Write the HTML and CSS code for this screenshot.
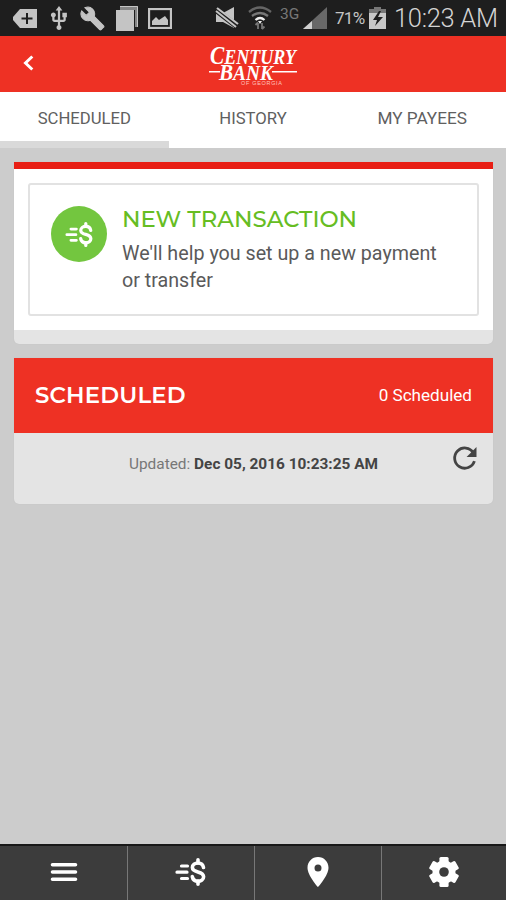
FILE: index.html
```html
<!DOCTYPE html>
<html lang="en">
<head>
<meta charset="utf-8">
<title>Scheduled</title>
<link rel="stylesheet" href="styles.css">
</head>
<body>
<svg class="defs" width="0" height="0"><defs>
<g id="pay" fill="none" stroke="currentColor" stroke-width="3.6" stroke-linecap="round">
<path d="M29.5 10.5C29 7.400 26.800 6 24 6c-3 0-5.600 1.700-5.600 4.500 0 6 11.200 2.800 11.200 9.200 0 2.900-2.600 4.500-5.600 4.500-3 0-5.200-1.600-5.700-4.600"/>
<path d="M24 2.800V6M24 24v3.200"/><path d="M7.500 9h6M3 15.200h10M7.500 21.500h6" stroke-width="3.200"/>
</g></defs></svg>
<div class="screen">
<div class="status">
<svg class="tag" viewBox="0 0 24 19"><path fill="currentColor" d="M7 0h17v19H7L0 11V8z"/><path d="M14 4v11M8.500 9.500h11" stroke="#1e1e1e" stroke-width="2"/></svg>
<svg class="usb" viewBox="4 1 16 22" preserveAspectRatio="none"><path fill="currentColor" d="M15 7v4h1v2h-3V5h2l-3-4-3 4h2v8H8v-2.070c.7-.37 1.200-1.080 1.200-1.930 0-1.210-.99-2.200-2.200-2.200S4.800 7.790 4.800 9c0 .85.5 1.560 1.200 1.930V13c0 1.110.89 2 2 2h3v3.050c-.71.37-1.200 1.100-1.200 1.950 0 1.220.99 2.200 2.200 2.200s2.200-.98 2.200-2.200c0-.85-.49-1.580-1.200-1.950V15h3c1.110 0 2-.89 2-2v-2h1V7z"/></svg>
<svg class="wrench" viewBox="0 0 24 24"><path fill="currentColor" stroke="currentColor" d="M22.700 19l-9.100-9.100c.9-2.300.4-5-1.500-6.900-2-2-5-2.400-7.400-1.300L9 6 6 9 1.600 4.700C.4 7.100.9 10.100 2.900 12.100c1.900 1.900 4.600 2.400 6.900 1.500l9.100 9.100c.4.4 1 .4 1.400 0l2.300-2.300c.5-.4.5-1.100.1-1.400z"/></svg>
<svg class="copy" viewBox="0 0 22 25"><path fill="#858585" d="M4 0h18v21h-3V4H4z"/><path fill="currentColor" d="M0 4h18v21H0z"/><path d="M4 .5h17.500V21" stroke="currentColor" fill="none"/></svg>
<svg class="image" viewBox="0 0 24 21"><rect x="1" y="1" width="22" height="19" fill="none" stroke="currentColor" stroke-width="2.300"/><path fill="currentColor" d="M4 17v-4l4-4 3 3 6-4 3 4v5z"/></svg>
<svg class="mute" viewBox="0 0 24 22"><path fill="currentColor" d="M1 6h7l11-6v21L8 15H1z"/><path d="M1 3l22 17" stroke="#1e1e1e" stroke-width="6"/><path d="M2 1l21 16" stroke="currentColor" stroke-width="2.200"/><path d="M1 4l20 16" stroke="currentColor" stroke-width="2"/></svg>
<svg class="wifi" viewBox="0 0 24 24" fill="none" stroke-width="2.300"><path d="M1 6q11-9 22 0" stroke="#656565"/><path d="M4 10q8-6 16 0" stroke="#777"/><path d="M7.500 14q4.500-4 9 0" stroke="#eee"/><path fill="#eee" d="M10 15h4l-2 3z"/><path stroke="#777" stroke-width="1.800" d="M10 17v6M7.500 19l2.500-2.500M14 17v6m2.500-2.500L14 23"/></svg>
<span class="net">3G</span>
<svg class="signal" viewBox="0 0 24 22"><path fill="#686868" d="M24 0v22H0z"/><path fill="#d0d0d0" d="M9 14v8H0z"/></svg>
<span class="pct">71%</span>
<svg class="battery" viewBox="0 0 17 22"><path fill="#777" d="M5 0h7v2h5v6H0V2h5z"/><path fill="#c8c8c8" d="M0 6h17v16H0z"/><path fill="#1e1e1e" d="M10 4l-6 9h4l-2 6 8-9H9l3-6z"/></svg>
<span class="time">10:23 AM</span>
</div>
<header class="header">
<svg class="back" viewBox="0 0 12 18"><path d="M9.800 2.500L3 9l6.800 6.500" fill="none" stroke="#fff" stroke-width="3"/></svg>
<svg class="logo" viewBox="0 0 90 46" fill="#fff">
<g class="brand"><text x="1" y="23" textLength="86" lengthAdjust="spacingAndGlyphs"><tspan font-size="26">C</tspan><tspan font-size="22">ENTURY</tspan></text>
<text x="10" y="39" textLength="54" lengthAdjust="spacingAndGlyphs"><tspan font-size="24">B</tspan><tspan font-size="22">ANK</tspan></text></g>
<path d="M0 30h11v1.600H0zM63 30h25v1.600H63z"/><text class="sub" x="32" y="44" font-size="5.500" textLength="41">OF GEORGIA</text></svg>
</header>
<nav class="tabs"><span class="tab active">SCHEDULED</span><span class="tab">HISTORY</span><span class="tab payees">MY PAYEES</span></nav>
<main class="main">
<section class="card new">
<div class="action">
<div class="disc"><svg viewBox="0 0 34 30"><use href="#pay"/></svg></div>
<div><h2 class="title">NEW TRANSACTION</h2><p class="help">We'll help you set up a new payment<br>or transfer</p></div>
</div>
</section>
<section class="card">
<div class="bar"><h2 class="bar-title">SCHEDULED</h2><span class="count">0 Scheduled</span></div>
<div class="update"><span class="stamp">Updated: <b>Dec 05, 2016 10:23:25 AM</b></span>
<svg class="refresh" viewBox="0 0 24 24"><path d="M20.500 6.500A9.700 9.700 0 1 0 21.500 14.500" fill="none" stroke="#444" stroke-width="2.700"/><path fill="#444" d="M23.500 1v9.500H14z"/></svg></div>
</section>
</main>
<footer class="footer">
<div class="item"><svg class="menu" viewBox="0 0 28 22"><path d="M2.500 3.800h23M2.500 11h23M2.500 18.200h23" stroke="#fff" stroke-width="3.600" stroke-linecap="round"/></svg></div>
<div class="item"><svg class="pay" viewBox="0 0 34 30"><use href="#pay"/></svg></div>
<div class="item"><svg class="pin" viewBox="0 0 22 30"><path fill="#fff" fill-rule="evenodd" d="M11 0C5 0 .5 4.800.5 10.700.500 18.500 11 30 11 30s10.500-11.500 10.500-19.300C21.500 4.800 17 0 11 0zm0 14.500a3.500 3.500 0 1 1 0-7 3.500 3.500 0 0 1 0 7z"/></svg></div>
<div class="item"><svg class="gear" viewBox="-15 -15 30 30"><g fill="#fff"><circle r="11.500"/><rect x="-4.600" y="-15" width="9.200" height="30" rx="1.500"/><rect x="-4.600" y="-15" width="9.200" height="30" rx="1.500" transform="rotate(60)"/><rect x="-4.600" y="-15" width="9.200" height="30" rx="1.500" transform="rotate(120)"/></g><circle r="4.800" fill="#3c3c3c"/></svg></div>
</footer>
</div>
</body>
</html>
```
FILE: styles.css
```css
* { box-sizing: border-box; }
body { margin: 0; font-family: Roboto, "Liberation Sans", sans-serif; }
h2, p { margin: 0; }
svg { display: block; flex: none; }
.defs { position: absolute; }
.screen { width: 506px; height: 900px; display: flex; flex-direction: column; background: #ccc; overflow: hidden; }
.status { height: 36px; flex: none; background: #1e1e1e; color: #c4c4c4; display: flex; align-items: center; padding-left: 13px; white-space: nowrap; }
.tag { width: 24px; height: 19px; }
.usb { width: 18px; height: 25px; margin-left: 13px; }
.wrench { width: 25px; height: 25px; margin-left: 12px; }
.copy { width: 22px; height: 25px; margin-left: 11px; }
.image { width: 24px; height: 21px; margin-left: 10px; }
.mute { width: 24px; height: 22px; margin-left: 43px; }
.wifi { width: 24px; height: 24px; margin-left: 9px; }
.net { width: 20px; margin: -9px 0 0 8px; font-size: 15.5px; color: #777; }
.signal { width: 24px; height: 22px; margin-left: 3px; }
.pct { width: 31px; margin-left: 8px; font-size: 17px; letter-spacing: -.7px; }
.battery { width: 17px; height: 22px; margin-left: 3px; }
.time { margin-left: 8px; font-size: 25.5px; font-weight: 300; letter-spacing: -.3px; color: #d4d4d4; }
.header { height: 56px; flex: none; background: #ee3124; display: flex; align-items: center; padding-left: 22px; }
.back { width: 13px; height: 18px; margin-top: -2px; }
.logo { width: 90px; height: 46px; margin-left: 174px; overflow: visible; }
.brand { font-family: "Liberation Serif", serif; font-style: italic; font-weight: bold; }
.sub { font-family: "Liberation Sans", sans-serif; fill: #ffc5be; }
.tabs { height: 56px; flex: none; background: #fff; display: grid; grid-template-columns: repeat(3, 1fr); }
.tab { display: flex; justify-content: center; align-items: center; height: 56px; border-bottom: 7px solid #fff; font-size: 16.7px; color: #606060; padding-top: 3px; }
.payees { font-size: 17.2px; padding-left: 1px; }
.active { border-color: #d9d9d9; }
.main { flex: 1; padding: 14px 13px 0 14px; display: flex; flex-direction: column; gap: 14px; }
.card { background: #e4e4e4; border-radius: 0 0 5px 5px; overflow: hidden; box-shadow: 0 0 1px #bbb; }
.new { height: 182px; background: #fff; border-top: 7px solid #e81e14; border-bottom: 14px solid #e4e4e4; padding: 14px 14px 0; }
.action { height: 133px; border: 2px solid #e2e2e2; border-radius: 3px; display: flex; padding: 21px 0 0 21px; gap: 15px; }
.disc { width: 56px; height: 56px; flex: none; border-radius: 50%; background: #73c63f; color: #fff; display: grid; place-items: center; }
.disc svg { width: 31px; height: 27px; }
.title { margin-top: -1px; font: 500 22.8px/29px Montserrat, Lato, sans-serif; letter-spacing: 0; color: #66bd22; white-space: nowrap; }
.help { margin-top: 6px; font-size: 19.7px; line-height: 27px; color: #5a5a5a; white-space: nowrap; }
.bar { height: 75px; background: #ee3124; color: #fff; display: flex; align-items: center; justify-content: space-between; padding: 0 21px 2px; }
.bar-title { font: 600 22.8px/30px Montserrat, Lato, sans-serif; letter-spacing: .2px; }
.count { font-size: 17.1px; }
.update { height: 71px; display: flex; padding: 13px 16px 0 115px; justify-content: space-between; color: #777; font-size: 15.4px; }
.stamp { padding-top: 9px; white-space: nowrap; }
.stamp b { color: #444; }
.refresh { width: 25px; height: 25px; }
.footer { height: 56px; flex: none; background: #3c3c3c; border-top: 2px solid #181818; display: grid; grid-template-columns: 128px 127px 127px 124px; color: #fff; }
.item { display: grid; place-items: center; border-right: 1px solid #777; padding-bottom: 2px; }
.item:last-child { border: 0; }
.menu { width: 28px; height: 22px; }
.pay { width: 34px; height: 30px; }
.pin { width: 22px; height: 30px; }
.gear { width: 30px; height: 30px; }
```
